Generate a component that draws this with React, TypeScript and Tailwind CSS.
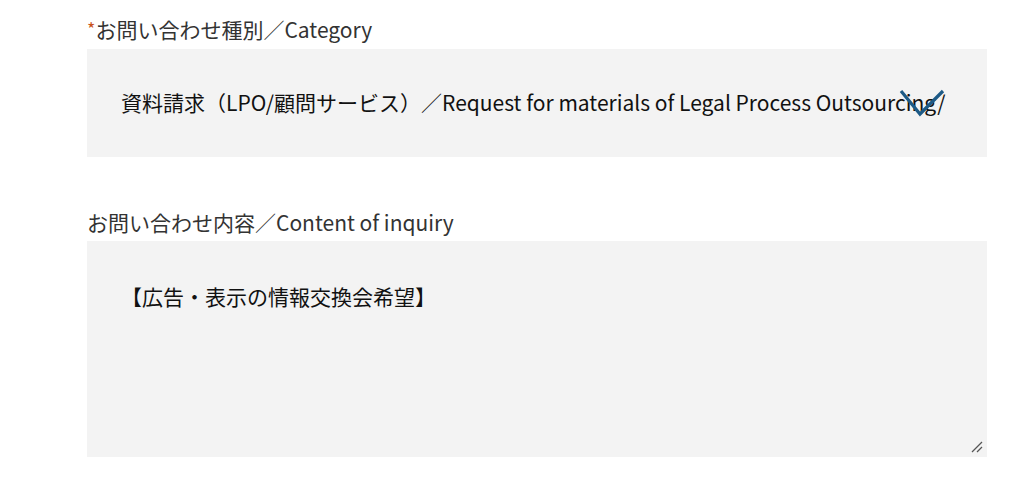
import React from "react";

const font = { fontFamily: '"Noto Sans CJK JP", "Noto Sans", sans-serif' };

export default function App() {
  return (
    <div className="w-[1017px] h-[490px] bg-white overflow-hidden" style={font}>
      <div className="pl-[87px] pt-[13px] w-[987px]">
        <div className="text-[21px] leading-[32px] text-[#333333]">
          <span className="text-[#c8531c] text-[18px] relative top-[-2px]">*</span>お問い合わせ種別／Category
        </div>
        <div className="relative mt-[3px] h-[108px] bg-[#f3f3f3] flex items-center pl-[34px] text-[21px] text-[#111111] whitespace-nowrap overflow-hidden">
          資料請求（LPO/顧問サービス）／Request for materials of Legal Process Outsourcing/
          <svg className="absolute left-[812px] top-[40px]" width="48" height="28" viewBox="0 0 48 28" fill="none">
            <path d="M2 2 L21 25 L44 2" stroke="#1d5a86" strokeWidth="3.2" strokeLinecap="butt" strokeLinejoin="miter" />
          </svg>
        </div>
        <div className="mt-[49px] text-[21px] leading-[32px] text-[#333333]">お問い合わせ内容／Content of inquiry</div>
        <div className="relative mt-[3px] w-[900px] h-[216px]">
          <textarea
            className="block w-full h-full bg-[#f3f3f3] pl-[34px] pt-[40px] text-[21px] text-[#111111] outline-none resize-none"
            style={font}
            defaultValue="【広告・表示の情報交換会希望】"
          />
          <svg className="absolute right-[4px] bottom-[4px]" width="12" height="12" viewBox="0 0 12 12" fill="none">
            <path d="M1 11 L11 1" stroke="#555555" strokeWidth="1.3" />
            <path d="M6 11 L11 6" stroke="#555555" strokeWidth="1.3" />
          </svg>
        </div>
      </div>
    </div>
  );
}
